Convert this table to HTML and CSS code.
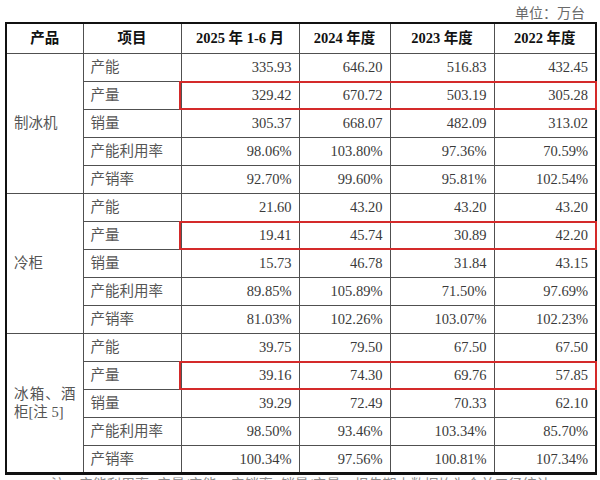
FILE: index.html
```html
<!DOCTYPE html>
<html lang="zh-CN">
<head>
<meta charset="utf-8">
<title>产能产量表</title>
<link rel="stylesheet" href="styles.css">
</head>
<body>
<div class="page">
  <div class="unit">单位：万台</div>
  <table class="grid">
    <colgroup>
      <col class="c1"><col class="c2"><col class="c3"><col class="c4"><col class="c5"><col class="c6">
    </colgroup>
    <thead>
      <tr class="head">
        <th>产品</th><th>项目</th><th>2025 年 1-6 月</th><th>2024 年度</th><th>2023 年度</th><th>2022 年度</th>
      </tr>
    </thead>
    <tbody>
      <tr><td class="prod" rowspan="5">制冰机</td><td class="item">产能</td><td class="num">335.93</td><td class="num">646.20</td><td class="num">516.83</td><td class="num">432.45</td></tr>
      <tr><td class="item">产量</td><td class="num hl"><span class="redbox"></span>329.42</td><td class="num">670.72</td><td class="num">503.19</td><td class="num">305.28</td></tr>
      <tr><td class="item">销量</td><td class="num">305.37</td><td class="num">668.07</td><td class="num">482.09</td><td class="num">313.02</td></tr>
      <tr><td class="item">产能利用率</td><td class="num">98.06%</td><td class="num">103.80%</td><td class="num">97.36%</td><td class="num">70.59%</td></tr>
      <tr><td class="item">产销率</td><td class="num">92.70%</td><td class="num">99.60%</td><td class="num">95.81%</td><td class="num">102.54%</td></tr>

      <tr><td class="prod" rowspan="5">冷柜</td><td class="item">产能</td><td class="num">21.60</td><td class="num">43.20</td><td class="num">43.20</td><td class="num">43.20</td></tr>
      <tr><td class="item">产量</td><td class="num hl"><span class="redbox"></span>19.41</td><td class="num">45.74</td><td class="num">30.89</td><td class="num">42.20</td></tr>
      <tr><td class="item">销量</td><td class="num">15.73</td><td class="num">46.78</td><td class="num">31.84</td><td class="num">43.15</td></tr>
      <tr><td class="item">产能利用率</td><td class="num">89.85%</td><td class="num">105.89%</td><td class="num">71.50%</td><td class="num">97.69%</td></tr>
      <tr><td class="item">产销率</td><td class="num">81.03%</td><td class="num">102.26%</td><td class="num">103.07%</td><td class="num">102.23%</td></tr>

      <tr><td class="prod just" rowspan="5">冰箱、酒柜[注 5]</td><td class="item">产能</td><td class="num">39.75</td><td class="num">79.50</td><td class="num">67.50</td><td class="num">67.50</td></tr>
      <tr><td class="item">产量</td><td class="num hl"><span class="redbox"></span>39.16</td><td class="num">74.30</td><td class="num">69.76</td><td class="num">57.85</td></tr>
      <tr><td class="item">销量</td><td class="num">39.29</td><td class="num">72.49</td><td class="num">70.33</td><td class="num">62.10</td></tr>
      <tr><td class="item">产能利用率</td><td class="num">98.50%</td><td class="num">93.46%</td><td class="num">103.34%</td><td class="num">85.70%</td></tr>
      <tr><td class="item">产销率</td><td class="num">100.34%</td><td class="num">97.56%</td><td class="num">100.81%</td><td class="num">107.34%</td></tr>
    </tbody>
  </table>
  <p class="note">注：产能利用率=产量/产能，产销率=销量/产量，报告期内数据均为合并口径统计。</p>
</div>
</body>
</html>
```
FILE: styles.css
```css
html, body {
  margin: 0;
  padding: 0;
  background: #ffffff;
}

body {
  font-family: "Liberation Serif", "Noto Sans CJK SC", serif;
  font-size: 14.5px;
  color: #3a3a3a;
  overflow: hidden;
}

.page {
  padding: 5px 0 0 5px;
  width: 592px;
}

.unit {
  text-align: right;
  padding-right: 12px;
  height: 17px;
  line-height: 17px;
  font-size: 14px;
  color: #6a6a6a;
}

.grid {
  border-collapse: collapse;
  table-layout: fixed;
  width: 591px;
  border: 2px solid #111;
  border-bottom-width: 3px;
}

.c1 { width: 77px; }
.c2 { width: 98px; }
.c3 { width: 118px; }
.c4 { width: 91px; }
.c5 { width: 104px; }
.c6 { width: 102px; }

.grid th,
.grid td {
  border: 1px solid #505050;
  padding: 0 7px;
  line-height: 18px;
}

.head {
  height: 30px;
}

.head th {
  font-weight: bold;
  color: #111;
  text-align: center;
  font-size: 14.5px;
}

tbody tr {
  height: 28px;
}

.prod {
  color: #555;
  text-align: left;
  vertical-align: middle;
  padding: 0 6px;
  line-height: 20px;
}

.just {
  text-align: justify;
}

.item {
  color: #555;
  text-align: left;
}

.num {
  text-align: right;
  padding-right: 8px;
}

.hl {
  position: relative;
}

.redbox {
  position: absolute;
  left: -3px;
  top: -1px;
  width: 418px;
  height: 29px;
  border: 2px solid #d42a2a;
  box-sizing: border-box;
  pointer-events: none;
}

.note {
  margin: 1px 0 0 46px;
  font-size: 14px;
  line-height: 18px;
  color: #8a8a8a;
  white-space: nowrap;
}
```
